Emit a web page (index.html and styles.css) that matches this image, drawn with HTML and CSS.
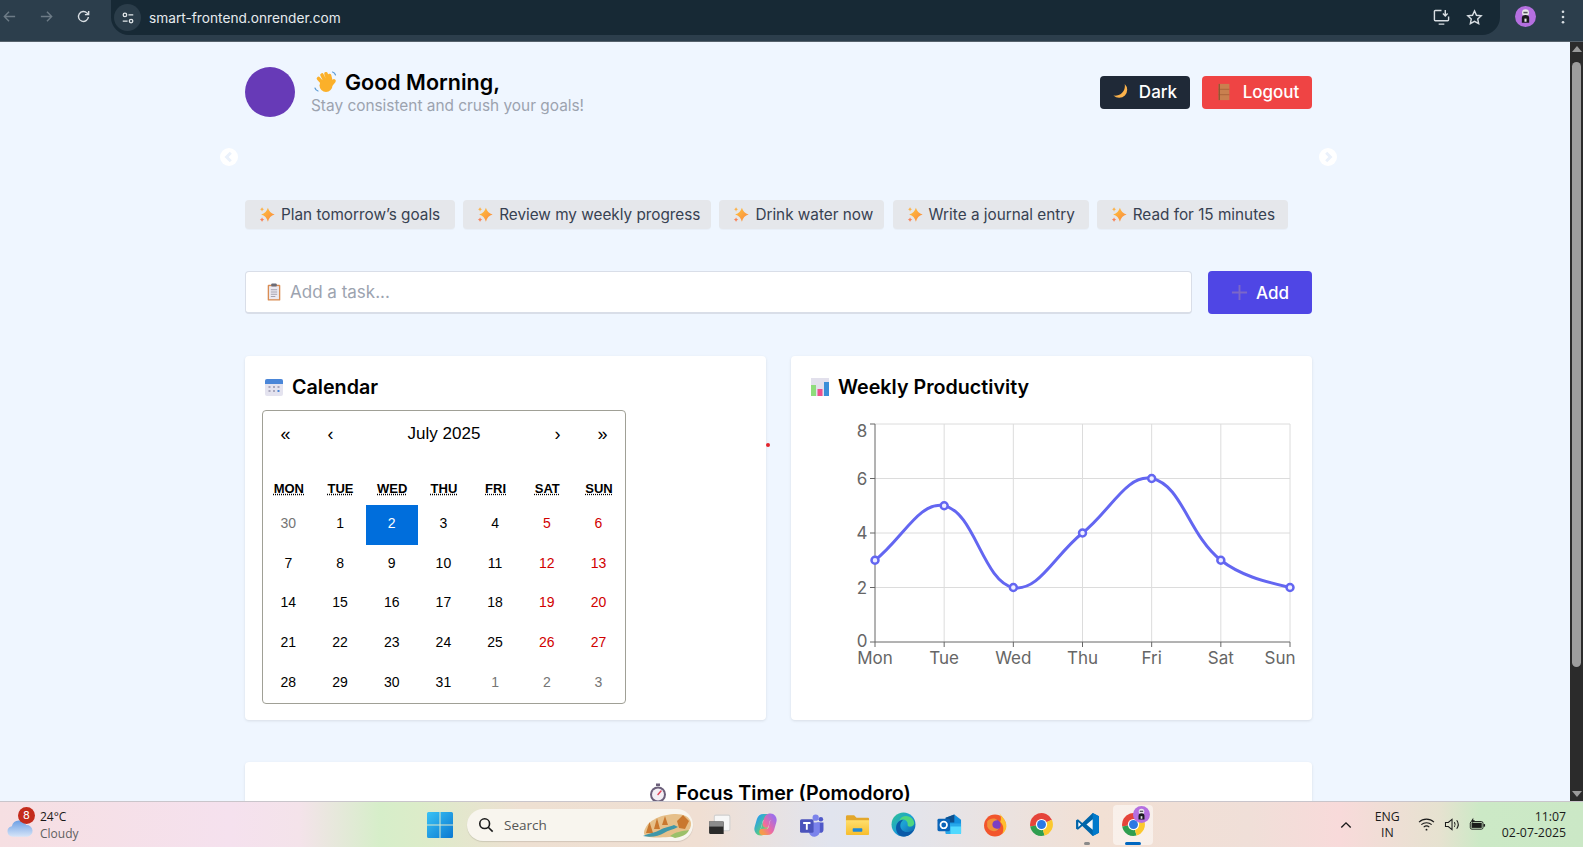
FILE: index.html
```html
<!DOCTYPE html>
<html lang="en">
<head>
  <meta charset="UTF-8">
  <title>Smart Frontend</title>
  <meta name="viewport" content="width=device-width, initial-scale=1.0">
  <link rel="stylesheet" href="styles.css">
</head>
<body>
  <!-- Shared icons -->
  <svg class="sprite" aria-hidden="true">
    <defs>
      <linearGradient id="sparkGrad" x1="0" y1="0" x2="1" y2="1"><stop offset="0" stop-color="#ffc53d"/><stop offset="1" stop-color="#f9853f"/></linearGradient>
      <linearGradient id="edgeGrad" x1="0" y1="0" x2="1" y2="1"><stop offset="0" stop-color="#2fc58c"/><stop offset=".5" stop-color="#1c9fd6"/><stop offset="1" stop-color="#0c59a4"/></linearGradient>
      <linearGradient id="copilotA" x1="0" y1="0" x2="1" y2="1"><stop offset="0" stop-color="#2a9fe8"/><stop offset=".6" stop-color="#52c98a"/><stop offset="1" stop-color="#f2c14c"/></linearGradient>
      <linearGradient id="copilotB" x1="1" y1="0" x2="0" y2="1"><stop offset="0" stop-color="#a06ee8"/><stop offset=".6" stop-color="#ee6aa2"/><stop offset="1" stop-color="#f59a4c"/></linearGradient>
      <linearGradient id="folderGrad" x1="0" y1="0" x2="0" y2="1"><stop offset="0" stop-color="#ffdf6e"/><stop offset="1" stop-color="#f7bd2c"/></linearGradient>
      <linearGradient id="winGrad" x1="0" y1="0" x2="1" y2="1"><stop offset="0" stop-color="#3ac3f5"/><stop offset="1" stop-color="#0a78d1"/></linearGradient>
      <linearGradient id="cloudGrad" x1="0" y1="0" x2="0" y2="1"><stop offset="0" stop-color="#6d9fe4"/><stop offset="1" stop-color="#d5e4f8"/></linearGradient>
      <symbol id="sparkles" viewBox="0 0 20 20">
        <path fill="url(#sparkGrad)" d="M11 2c1 3.5 3.500 6.500 7.500 7.500-4 1-6.500 4-7.500 8-1-4-3.500-7-7.500-8 4-1 6.500-4 7.500-7.500z"/>
        <path fill="#fbb24b" d="M4.500 1c.4 1.600 1 2.300 2.500 2.700-1.500.4-2.100 1.100-2.500 2.700C4.100 4.800 3.500 4.100 2 3.700 3.500 3.300 4.100 2.600 4.500 1z"/>
        <path fill="#f7835a" d="M4.500 12.500c.4 1.600 1 2.300 2.500 2.700-1.500.4-2.100 1.100-2.500 2.700-.4-1.600-1-2.300-2.500-2.700 1.500-.4 2.100-1.100 2.500-2.700z"/>
      </symbol>
      <symbol id="chrome" viewBox="0 0 24 24">
        <path fill="#e5443a" d="M12 12L21.97 7.35A11 11 0 0 0 1.17 13.9Z"/>
        <path fill="#2f9e4f" d="M12 12L1.17 13.9A11 11 0 0 0 14.85 22.63Z"/>
        <path fill="#fbc82e" d="M12 12L14.85 22.63A11 11 0 0 0 21.97 7.35Z"/>
        <circle cx="12" cy="12" r="5.4" fill="#fff"/>
        <circle cx="12" cy="12" r="4.3" fill="#2b78e4"/>
      </symbol>
      <symbol id="profile" viewBox="0 0 20 20">
        <circle cx="10" cy="10" r="10" fill="#b56fe0"/>
        <circle cx="10" cy="6.5" r="3.3" fill="#e8e8ea"/>
        <path fill="#1b1b20" d="M6.500 16v-4.500a3.500 3 0 0 1 7 0V16z"/>
        <rect x="9" y="12" width="2" height="3" fill="#e8e8ea"/>
        <rect x="8" y="5.500" width="4" height="1.500" fill="#55555e"/>
      </symbol>
    </defs>
  </svg>

  <header class="browser-bar">
    <svg class="nav-icon dim" viewBox="0 0 16 16"><path d="M14 8H2.500M7.500 3L2.500 8l5 5"/></svg>
    <svg class="nav-icon dim" viewBox="0 0 16 16"><path d="M2 8h11.500M8.500 3l5 5-5 5"/></svg>
    <svg class="nav-icon" viewBox="0 0 16 16"><path d="M13.200 8.500a5.300 5.300 0 1 1-1.400-4.100L13.500 6M13.500 2v4h-4"/></svg>
    <div class="omnibox">
      <span class="site-info">
        <svg viewBox="0 0 16 16"><circle cx="4.5" cy="4.5" r="2"/><path d="M8.500 4.500H14M2 11.500h5.500"/><circle cx="11.5" cy="11.5" r="2"/></svg>
      </span>
      <span class="url">smart-frontend.onrender.com</span>
      <svg class="omni-icon install" viewBox="0 0 18 18"><path d="M9 1.500H2.500a1 1 0 0 0-1 1v9a1 1 0 0 0 1 1h13a1 1 0 0 0 1-1V8M6 16h6M13 1v6M10.500 4.800L13 7.300l2.500-2.500"/></svg>
      <svg class="omni-icon" viewBox="0 0 18 18"><path d="M9 2l2.100 4.600 5 .6-3.700 3.400 1 5L9 13.100l-4.400 2.500 1-5L1.900 7.200l5-.6z"/></svg>
    </div>
    <svg class="bar-avatar"><use href="#profile"/></svg>
    <svg class="kebab" viewBox="0 0 4 16"><circle cx="2" cy="2" r="1.5"/><circle cx="2" cy="8" r="1.5"/><circle cx="2" cy="14" r="1.5"/></svg>
  </header>

  <div class="viewport">
    <main class="page">
      <section class="top-row">
        <div class="user">
          <div class="avatar"></div>
          <div class="greeting">
            <h1>
              <svg class="emoji-wave" viewBox="0 0 24 24">
                <g fill="none" stroke="#fbb02a" stroke-width="3.6" stroke-linecap="round">
                  <path d="M10 14L5 8.500M12 12L8.500 5M15 11L12.500 3.800M17.500 11.500L16 5.500M18 14l2.500-3"/>
                </g>
                <circle cx="12.500" cy="15.500" r="6.500" fill="#fbb02a"/>
                <path fill="none" stroke="#5b9bd5" stroke-width="1.2" stroke-linecap="round" d="M19 2c1.500.4 2.600 1.500 3 3M1.500 18c.4 1.500 1.500 2.600 3 3"/>
              </svg>
              Good Morning,
            </h1>
            <p>Stay consistent and crush your goals!</p>
          </div>
        </div>
        <div class="actions">
          <button class="btn btn-dark">
            <svg class="btn-emoji" viewBox="0 0 20 20"><path fill="#fbb24b" d="M13 1A9 9 0 1 1 0.500 14C8 15 14.500 9 13 1z"/></svg>
            Dark
          </button>
          <button class="btn btn-red">
            <svg class="btn-emoji" viewBox="0 0 20 20"><rect x="4" y="1" width="12" height="18" fill="#c9804f"/><path stroke="#a9623a" stroke-width="1" d="M4 7h12M4 13h12"/><rect x="4" y="1" width="1.500" height="18" fill="#8f5532"/></svg>
            Logout
          </button>
        </div>
      </section>

      <div class="carousel-nav">
        <span class="round-arrow"><svg viewBox="0 0 10 10"><path d="M6.500 1.500L3 5l3.500 3.500"/></svg></span>
        <span class="round-arrow"><svg viewBox="0 0 10 10"><path d="M3.500 1.500L7 5 3.500 8.500"/></svg></span>
      </div>

      <div class="chips">
        <button class="chip"><svg class="spark"><use href="#sparkles"/></svg>Plan tomorrow’s goals</button>
        <button class="chip"><svg class="spark"><use href="#sparkles"/></svg>Review my weekly progress</button>
        <button class="chip"><svg class="spark"><use href="#sparkles"/></svg>Drink water now</button>
        <button class="chip"><svg class="spark"><use href="#sparkles"/></svg>Write a journal entry</button>
        <button class="chip"><svg class="spark"><use href="#sparkles"/></svg>Read for 15 minutes</button>
      </div>

      <form class="task-form">
        <label class="task-input">
          <svg class="clip-emoji" viewBox="0 0 16 20"><rect x="1" y="2" width="14" height="17.5" rx="1" fill="#d98d54"/><rect x="2.500" y="3.500" width="11" height="14.5" fill="#eceaf2"/><path stroke="#9d9aa8" d="M4.500 7.500h7M4.500 10h7M4.500 12.500h7M4.500 15h5"/><rect x="5" y="0.500" width="6" height="3.5" rx="1" fill="#6b6b76"/></svg>
          <input type="text" placeholder="Add a task...">
        </label>
        <button type="button" class="add-btn">
          <svg viewBox="0 0 18 18"><path d="M9 1v16M1 9h16"/></svg>
          Add
        </button>
      </form>

      <section class="cards">
        <span class="red-dot"></span>
        <article class="card">
          <h2>
            <svg class="title-emoji" viewBox="0 0 20 20"><rect x="1" y="2" width="18" height="17" rx="2" fill="#e4e3ef"/><path fill="#4a86d8" d="M1 7V4a2 2 0 0 1 2-2h14a2 2 0 0 1 2 2v3z"/><path fill="#a9a8bd" d="M4.500 9h2v2h-2zM9 9h2v2H9zM13.500 9h2v2h-2zM4.500 13h2v2h-2zM9 13h2v2H9z"/><path fill="#4a86d8" d="M13.500 13h2v2h-2z"/></svg>
            Calendar
          </h2>
          <div class="calendar">
            <div class="cal-nav">
              <span>«</span><span>‹</span><span class="cal-month">July 2025</span><span>›</span><span>»</span>
            </div>
            <div class="cal-weekdays">
              <abbr>Mon</abbr><abbr>Tue</abbr><abbr>Wed</abbr><abbr>Thu</abbr><abbr>Fri</abbr><abbr>Sat</abbr><abbr>Sun</abbr>
            </div>
            <div class="cal-days">
              <span class="other">30</span><span>1</span><span class="today">2</span><span>3</span><span>4</span><span class="weekend">5</span><span class="weekend">6</span>
              <span>7</span><span>8</span><span>9</span><span>10</span><span>11</span><span class="weekend">12</span><span class="weekend">13</span>
              <span>14</span><span>15</span><span>16</span><span>17</span><span>18</span><span class="weekend">19</span><span class="weekend">20</span>
              <span>21</span><span>22</span><span>23</span><span>24</span><span>25</span><span class="weekend">26</span><span class="weekend">27</span>
              <span>28</span><span>29</span><span>30</span><span>31</span><span class="other">1</span><span class="other">2</span><span class="other">3</span>
            </div>
          </div>
        </article>

        <article class="card">
          <h2>
            <svg class="title-emoji" viewBox="0 0 20 20"><rect x="1" y="1" width="18" height="18" fill="#e2e0ec"/><rect x="1" y="8" width="5" height="11" fill="#8fdc7c"/><rect x="7.500" y="12" width="5" height="7" fill="#ef4f8c"/><rect x="14" y="5" width="5" height="14" fill="#3b8fd8"/></svg>
            Weekly Productivity
          </h2>
          <svg class="chart" viewBox="808 410 490 260">
            <g class="grid">
              <path d="M875 424H1290M875 478.5H1290M875 533H1290M875 587.5H1290"/>
              <path d="M944.17 424V642M1013.33 424V642M1082.5 424V642M1151.67 424V642M1220.83 424V642M1290 424V642"/>
            </g>
            <path class="axis" d="M875 424V642H1290M870 424H875M870 478.5H875M870 533H875M870 587.5H875M870 642H875M875 642V647M944.17 642V647M1013.33 642V647M1082.5 642V647M1151.67 642V647M1220.83 642V647M1290 642V647"/>
            <g class="y-labels">
              <text x="862" y="437">8</text>
              <text x="862" y="485">6</text>
              <text x="862" y="539">4</text>
              <text x="862" y="594">2</text>
              <text x="862" y="647">0</text>
            </g>
            <g class="x-labels">
              <text x="875" y="664">Mon</text>
              <text x="944.17" y="664">Tue</text>
              <text x="1013.33" y="664">Wed</text>
              <text x="1082.5" y="664">Thu</text>
              <text x="1151.67" y="664">Fri</text>
              <text x="1220.83" y="664">Sat</text>
              <text x="1280" y="664">Sun</text>
            </g>
            <path class="line" d="M875 560.25C902.67 538.45 919.2 500.83 944.17 505.75C974.53 511.73 982.97 581.52 1013.33 587.5C1038.3 592.42 1054.83 554.8 1082.5 533C1110.17 511.2 1126.7 473.58 1151.67 478.5C1182.03 484.48 1188.17 534.51 1220.83 560.25C1240 575 1262 581 1290 587.5"/>
            <g class="points">
              <circle cx="875" cy="560.25" r="3.5"/><circle cx="944.17" cy="505.75" r="3.5"/><circle cx="1013.33" cy="587.5" r="3.5"/><circle cx="1082.5" cy="533" r="3.5"/><circle cx="1151.67" cy="478.5" r="3.5"/><circle cx="1220.83" cy="560.25" r="3.5"/><circle cx="1290" cy="587.5" r="3.5"/>
            </g>
          </svg>
        </article>
      </section>

      <section class="card timer-card">
        <h2>
          <svg class="title-emoji" viewBox="0 0 20 20"><rect x="8" y="0.500" width="4" height="2.5" fill="#6b5f7a"/><circle cx="10" cy="11.5" r="8" fill="#6b5f7a"/><circle cx="10" cy="11.5" r="6" fill="#f3eff5"/><path stroke="#e0455a" stroke-width="1.5" stroke-linecap="round" d="M10 11.500L13 8"/></svg>
          Focus Timer (Pomodoro)
        </h2>
      </section>
    </main>

    <div class="scrollbar">
      <span class="sb-up"></span>
      <span class="sb-thumb"></span>
      <span class="sb-down"></span>
    </div>
  </div>

  <footer class="taskbar">
    <div class="weather">
      <svg class="cloud" viewBox="0 0 28 22"><path fill="url(#cloudGrad)" d="M7 21a5.500 5.500 0 0 1-1-10.900A8 8 0 0 1 21 9a6 6 0 0 1 1 12z"/></svg>
      <span class="badge">8</span>
      <div class="weather-text">
        <span>24°C</span>
        <span class="muted">Cloudy</span>
      </div>
    </div>

    <div class="apps">
      <svg class="win" viewBox="0 0 26 26"><path fill="url(#winGrad)" d="M0 1.500A1.500 1.500 0 0 1 1.500 0h11v12.500H0zM13.500 0h11A1.500 1.500 0 0 1 26 1.500v11H13.500zM0 13.500h12.500V26h-11A1.500 1.500 0 0 1 0 24.500zM13.500 13.500H26v11a1.500 1.500 0 0 1-1.500 1.500h-11z"/></svg>

      <div class="search">
        <svg class="search-icon" viewBox="0 0 18 18"><circle cx="7.5" cy="7.5" r="5.5"/><path d="M11.500 11.500L16.500 16.500"/></svg>
        <span>Search</span>
        <svg class="search-art" viewBox="0 0 52 26">
          <path fill="#e6c08a" d="M4 20C6 10 18 3 34 2c8-.5 16 2 17 9 1 8-8 13-22 14C14 26 3 26 4 20z"/>
          <path fill="#c9782f" d="M6 21l3.500-11L13 21zM14 17l3-11 3 11zM22 13l3-9 3 9zM37 9l6-6 6 6-4 8-6-1z"/>
          <path fill="#3f97a8" d="M3 24c6-3 12-3 17-6 5-3 9-3 14-5l4 2c-5 3-10 3-14 6-5 3-13 5-21 3z"/>
          <path fill="#9bc06a" d="M30 24c5-4 12-5 19-6-2 5-8 7-14 8z"/>
        </svg>
      </div>

      <span class="app">
        <svg viewBox="0 0 24 24"><rect x="7" y="3" width="15" height="15" rx="1.5" fill="#f7f7f7" stroke="#d0d0d0"/><path fill="#2a2a2a" d="M2 9h13a1 1 0 0 1 1 1v11H3a1 1 0 0 1-1-1z"/><path fill="#8c8c8c" d="M2 9h14v5H2z"/></svg>
      </span>
      <span class="app">
        <svg viewBox="0 0 24 24" fill="none" stroke-width="6" stroke-linecap="round" stroke-linejoin="round">
          <path stroke="url(#copilotA)" d="M15 5H10C8 5 7 6.500 6.500 8L4.500 15c-.8 3 1 5 3.500 4.500 1.500-.3 2.200-1.500 2.800-3.500l1-4"/>
          <path stroke="url(#copilotB)" d="M9 19h5c2 0 3-1.500 3.500-3l2-7c.8-3-1-5-3.500-4.500-1.500.3-2.200 1.500-2.800 3.500l-1 4"/>
        </svg>
      </span>
      <span class="app">
        <svg viewBox="0 0 24 24">
          <circle cx="16" cy="5.5" r="3" fill="#7b83eb"/><circle cx="21" cy="7" r="2.2" fill="#5059c9"/>
          <path fill="#5059c9" d="M17 10h6.500v7a3 3 0 0 1-6 0z"/>
          <path fill="#7b83eb" d="M9 10h11v8a5 5 0 0 1-10.500 1z"/>
          <rect x="1" y="7" width="13" height="13" rx="1.5" fill="#4b53bc"/>
          <path stroke="#fff" stroke-width="1.8" d="M4 10.500h7M7.500 10.500V17"/>
        </svg>
      </span>
      <span class="app">
        <svg viewBox="0 0 26 24"><path fill="#e3a72b" d="M1 4a1.500 1.500 0 0 1 1.500-1.500h7L12 5h12a1 1 0 0 1 1 1v3H1z"/><path fill="url(#folderGrad)" d="M1 7.500h24V22a1 1 0 0 1-1 1H2a1 1 0 0 1-1-1z"/><rect x="8" y="16" width="10" height="3.5" rx=".8" fill="#1f88d6"/></svg>
      </span>
      <span class="app">
        <svg viewBox="0 0 24 24">
          <circle cx="12" cy="12" r="11.5" fill="url(#edgeGrad)"/>
          <path fill="#0a5aa8" d="M22 17c-2 4-6 6.500-10 6.500-5 0-8-5-7-10 1-4 4-6 7-6-3 2-4 6-2 9 2 3 7 4 12 .5z"/>
          <path fill="#4fd67f" d="M8 8C10 3 17 2.500 20.500 6.500c2.500 3 2.500 6.500-1 7.500-2.500.5-4-.5-3.500-2.500C16 8 12 6 8 8z"/>
        </svg>
      </span>
      <span class="app">
        <svg viewBox="0 0 26 24"><path fill="#1490df" d="M9 5l9-3.500L25 7v14H9z"/><path fill="#28a8ea" d="M9 11h16v10a1 1 0 0 1-1 1H10a1 1 0 0 1-1-1z"/><path fill="#50d9ff" d="M14 14h11v7a1 1 0 0 1-1 1H14z"/><path fill="#0f4f8c" d="M9 5l9-3.500V10H9z"/><rect x="0.500" y="6" width="13" height="13" rx="1.5" fill="#0a64b8"/><circle cx="7" cy="12.5" r="3.4" fill="none" stroke="#fff" stroke-width="1.8"/></svg>
      </span>
      <span class="app">
        <svg viewBox="0 0 24 24">
          <circle cx="11.5" cy="13" r="10.5" fill="#f2552c"/>
          <path fill="#ffbd2e" d="M16 1c1 3 7 7 6.500 13-.4 3.500-2 5.500-4 7 2-5 1-9-2-11.500C18 7 17 4 16 1z"/>
          <circle cx="11.5" cy="12.5" r="5.5" fill="#7b3fc4"/>
          <path fill="#f0913a" d="M4 9c3-3.500 8-3.500 10-1-3 0-5 1.500-5 4 0 3 3 5 6.500 3.500C13 20 6 19 4 14z"/>
        </svg>
      </span>
      <span class="app"><svg viewBox="0 0 24 24"><use href="#chrome"/></svg></span>
      <span class="app running">
        <svg viewBox="0 0 24 24"><path fill="#0065a9" d="M17 1l6 3v16l-6 3L7 13.500 2.800 17 1 16V8l1.800-1L7 10.500z"/><path fill="#007acc" d="M17 1l6 3v16l-6 3z"/><path fill="#fff" fill-opacity=".95" d="M17 7l-6 5 6 5z"/><path fill="#fff" d="M3.200 9.500L5.800 12l-2.600 2.500z"/></svg>
      </span>
      <span class="app active">
        <svg viewBox="0 0 24 24"><use href="#chrome"/></svg>
        <svg class="app-badge"><use href="#profile"/></svg>
      </span>
    </div>

    <div class="tray">
      <svg class="chevron" viewBox="0 0 14 8"><path d="M1.500 7L7 1.500 12.500 7"/></svg>
      <div class="lang">ENG<br>IN</div>
      <svg class="tray-icon wifi" viewBox="0 0 18 16"><path d="M1 5.500c4.500-4.300 11.500-4.300 16 0M3.500 8.200c3-2.900 8-2.900 11 0M6 10.800c1.700-1.500 4.300-1.500 6 0"/><circle cx="9" cy="13.5" r="1" fill="#1a1a1a" stroke="none"/></svg>
      <svg class="tray-icon" viewBox="0 0 18 16"><path d="M1.500 5.800v4.400h3L8.500 13.500V2.500L4.500 5.800zM11 5.500c1 1.500 1 3.500 0 5M13.500 3.500c2 2.700 2 6.300 0 9"/></svg>
      <svg class="tray-icon" viewBox="0 0 20 16"><rect x="1.5" y="4.5" width="15" height="9" rx="2"/><rect x="3" y="6" width="12" height="6" fill="#1a1a1a" stroke="none"/><path d="M18 7.500v3" stroke-width="1.8"/><path fill="#1a1a1a" stroke="none" d="M5 0L2.500 4h2L3.500 7 7 3H5z"/></svg>
      <div class="clock">11:07<br>02-07-2025</div>
    </div>
  </footer>
</body>
</html>
```

FILE: styles.css
```css
* {
  box-sizing: border-box;
}

html, body {
  margin: 0;
  height: 100%;
}

body {
  display: flex;
  flex-direction: column;
  overflow: hidden;
  font-family: 'Inter', 'Liberation Sans', sans-serif;
  background: #eff6ff;
  color: #000;
}

.sprite {
  position: absolute;
  width: 0;
  height: 0;
}

/* Browser chrome */
.browser-bar {
  height: 42px;
  flex: none;
  display: flex;
  align-items: flex-start;
  background: #2c3e4c;
  border-bottom: 1px solid #56626c;
  padding-left: 2px;
}

.nav-icon {
  width: 15px;
  height: 15px;
  margin: 9px 22px 0 0;
  flex: none;
  fill: none;
  stroke: #d8dee3;
  stroke-width: 1.5;
}

.nav-icon.dim {
  stroke: #6d7b86;
}

.omnibox {
  width: 1389px;
  height: 35px;
  margin-left: -2px;
  display: flex;
  align-items: center;
  padding-left: 3px;
  background: #172935;
  border-radius: 0 0 18px 18px;
}

.site-info {
  width: 27px;
  height: 27px;
  border-radius: 50%;
  background: #2b3d4a;
  display: flex;
  align-items: center;
  justify-content: center;
}

.site-info svg {
  width: 14px;
  height: 14px;
  fill: none;
  stroke: #e2e7ea;
  stroke-width: 1.5;
}

.url {
  margin-left: 8px;
  font-size: 13.7px;
  color: #e6ebee;
  flex: 1;
}

.omni-icon {
  width: 17px;
  height: 17px;
  margin-right: 17px;
  fill: none;
  stroke: #d8dee3;
  stroke-width: 1.5;
}

.omni-icon.install {
  margin-right: 16px;
}

.bar-avatar {
  width: 21px;
  height: 21px;
  margin: 6px 0 0 15px;
}

.kebab {
  width: 4px;
  height: 14px;
  margin: 10px 0 0 25px;
  fill: #d8dee3;
}

/* Page */
.viewport {
  flex: 1;
  min-height: 0;
  display: flex;
  position: relative;
}

.page {
  flex: 1;
  min-width: 0;
  overflow: hidden;
  padding: 25px 0 0 245px;
}

.page > * {
  width: 1067px;
}

.top-row {
  display: flex;
  justify-content: space-between;
  align-items: center;
}

.user {
  display: flex;
  align-items: center;
  gap: 16px;
}

.avatar {
  width: 50px;
  height: 50px;
  border-radius: 50%;
  background: #673ab7;
}

.greeting {
  padding-top: 2px;
}

h1 {
  margin: 0;
  display: flex;
  align-items: center;
  gap: 7px;
  font-size: 21.5px;
  line-height: 26px;
  font-weight: 600;
}

.greeting p {
  margin: 0;
  font-size: 15.4px;
  line-height: 22px;
  color: #9ca3af;
}

.emoji-wave {
  width: 25px;
  height: 24px;
  margin-left: 2px;
}

.actions {
  display: flex;
  gap: 12px;
}

.btn {
  height: 33px;
  display: flex;
  align-items: center;
  justify-content: center;
  gap: 8px;
  border: 0;
  border-radius: 4px;
  color: #fff;
  font: 500 17px 'Inter', sans-serif;
}

.btn-dark {
  width: 90px;
  background: #1f2937;
}

.btn-red {
  width: 110px;
  gap: 10px;
  background: #ef4444;
}

.btn-emoji {
  width: 18px;
  height: 18px;
}

.carousel-nav {
  margin: 31px 0 0 -25px;
  display: flex;
  justify-content: space-between;
}

.page > .carousel-nav {
  width: 1117px;
}

.round-arrow {
  width: 18px;
  height: 18px;
  border-radius: 50%;
  background: #fff;
  display: flex;
  align-items: center;
  justify-content: center;
}

.round-arrow svg {
  width: 12px;
  height: 12px;
  fill: none;
  stroke: #eaf1fb;
  stroke-width: 2.5;
}

.chips {
  margin-top: 34px;
  display: grid;
  grid-template-columns: 210px 248px 165px 196px 191px;
  gap: 8.2px;
}

.chip {
  height: 29px;
  padding: 0 0 0 13px;
  display: flex;
  align-items: center;
  gap: 5px;
  border: 0;
  border-radius: 4px;
  background: #e5e7eb;
  color: #374151;
  font: 400 15.3px 'Inter', sans-serif;
  box-shadow: 0 1px 1px rgba(0, 0, 0, 0.03);
}

.spark {
  width: 18px;
  height: 18px;
}

.task-form {
  margin-top: 42px;
  display: flex;
  gap: 16px;
}

.task-input {
  flex: 1;
  height: 43px;
  display: flex;
  align-items: center;
  gap: 6px;
  padding-left: 20px;
  background: #fff;
  border: 1px solid #d9dee8;
  border-bottom-width: 2px;
  border-radius: 4px;
}

.clip-emoji {
  width: 16px;
  height: 18px;
}

.task-input input {
  flex: 1;
  border: 0;
  outline: 0;
  background: none;
  font: 400 17px 'Inter', sans-serif;
}

.task-input input::placeholder {
  color: #9ca3af;
  opacity: 1;
}

.add-btn {
  width: 104px;
  height: 43px;
  display: flex;
  align-items: center;
  justify-content: center;
  gap: 8px;
  border: 0;
  border-radius: 4px;
  background: #4f46e5;
  color: #fff;
  font: 500 17px 'Inter', sans-serif;
}

.add-btn svg {
  width: 17px;
  height: 17px;
  fill: none;
  stroke: #7b67c8;
  stroke-width: 2;
}

.cards {
  margin-top: 42px;
  display: grid;
  grid-template-columns: 521px 521px;
  gap: 25px;
  position: relative;
}

.red-dot {
  position: absolute;
  left: 521px;
  top: 87px;
  width: 4px;
  height: 4px;
  border-radius: 50%;
  background: #e3242b;
}

.card {
  height: 364px;
  padding: 17px;
  background: #fff;
  border-radius: 4px;
  box-shadow: 0 1px 3px rgba(0, 0, 0, 0.1);
}

h2 {
  margin: 0 0 9px;
  display: flex;
  align-items: center;
  gap: 8px;
  font-size: 19.7px;
  line-height: 28px;
  font-weight: 600;
}

.title-emoji {
  width: 20px;
  height: 20px;
  margin-left: 2px;
}

.chart {
  display: block;
  width: 490px;
  height: 260px;
}

.grid path {
  fill: none;
  stroke: #dcdcdc;
  stroke-width: 1;
}

.axis {
  fill: none;
  stroke: #666;
  stroke-width: 1;
}

.chart text {
  fill: #666;
  font-size: 17px;
  font-family: 'Inter', sans-serif;
  text-anchor: middle;
}

.line {
  fill: none;
  stroke: #6366f1;
  stroke-width: 3;
}

.points circle {
  fill: #eef;
  stroke: #6366f1;
  stroke-width: 2.5;
}

/* Calendar */
.calendar {
  width: 364px;
  height: 294px;
  border: 1px solid #a0a096;
  border-radius: 4px;
  font-family: 'Liberation Sans', Arial, sans-serif;
  color: #000;
}

.cal-nav {
  height: 46px;
  display: grid;
  grid-template-columns: 45px 45px 1fr 45px 45px;
  align-items: center;
  text-align: center;
  font-size: 18px;
}

.cal-month {
  font-size: 17px;
}

.cal-weekdays {
  margin-top: 15px;
  height: 33px;
  display: grid;
  grid-template-columns: repeat(7, 51.7px);
  align-items: center;
  text-align: center;
  font-size: 13px;
  font-weight: 700;
  text-transform: uppercase;
}

.cal-weekdays abbr {
  text-decoration: underline dotted;
}

.cal-days {
  display: grid;
  grid-template-columns: repeat(7, 51.7px);
  grid-auto-rows: 39.6px;
  font-size: 14px;
  text-align: center;
}

.cal-days span {
  display: flex;
  align-items: center;
  justify-content: center;
  padding: 0 1px 3px 0;
}

.cal-days .today {
  background: #006edc;
  color: #fff;
}

.cal-days .weekend {
  color: #d10000;
}

.cal-days .other {
  color: #757575;
}

/* Focus timer, cut off by the fold */
.timer-card {
  margin-top: 42px;
  height: 200px;
  padding-top: 17px;
}

.timer-card h2 {
  justify-content: center;
}

/* Scrollbar */
.scrollbar {
  width: 13px;
  flex: none;
  background: #2b2b2b;
  display: flex;
  flex-direction: column;
  align-items: center;
  padding: 4px 0;
}

.sb-up,
.sb-down {
  width: 0;
  height: 0;
  border-left: 5px solid transparent;
  border-right: 5px solid transparent;
}

.sb-up {
  border-bottom: 6px solid #9a9a9a;
}

.sb-down {
  margin-top: auto;
  border-top: 6px solid #9a9a9a;
}

.sb-thumb {
  width: 9px;
  height: 605px;
  margin-top: 10px;
  border-radius: 5px;
  background: #9e9e9e;
}

/* Windows taskbar */
.taskbar {
  height: 46px;
  flex: none;
  display: flex;
  align-items: center;
  position: relative;
  border-top: 1px solid #c9c5cb;
  background: linear-gradient(90deg, #f6dfe2 0, #f5e1ee 230px, #f4e3ea 300px, #d6eec9 380px, #dcecc9 420px, #eee0d2 520px, #f0dfd3 700px, #e1e4ee 830px, #e4e4ea 920px, #f2e0d4 1100px, #f0dfd8 1250px, #f8dada 1340px, #e6e2d0 1440px, #cce9c6 1480px, #cbe8c6 1583px);
}

.weather {
  width: 427px;
  flex: none;
  display: flex;
  align-items: center;
  position: relative;
  padding-left: 6px;
  font-size: 12px;
}

.cloud {
  width: 27px;
  height: 24px;
  margin-top: 4px;
}

.badge {
  position: absolute;
  left: 18px;
  top: -1px;
  width: 17px;
  height: 17px;
  border-radius: 50%;
  background: #c42b1c;
  color: #fff;
  font-size: 11px;
  line-height: 17px;
  text-align: center;
}

.weather-text {
  margin-left: 7px;
  display: flex;
  flex-direction: column;
  line-height: 17px;
  font-family: 'Open Sans', sans-serif;
  color: #1a1a1a;
}

.muted {
  color: #5f5f5f;
}

.apps {
  display: flex;
  align-items: center;
}

.win {
  width: 26px;
  height: 26px;
  margin-right: 14px;
}

.search {
  width: 226px;
  height: 32px;
  display: flex;
  align-items: center;
  padding-left: 11px;
  margin-right: 3px;
  border-radius: 16px;
  background: #f8f5ee;
  box-shadow: 0 1px 1px rgba(0, 0, 0, 0.12);
  font: 13.5px 'Open Sans', sans-serif;
  color: #555;
}

.search-icon {
  width: 16px;
  height: 16px;
  margin-right: 10px;
  fill: none;
  stroke: #1a1a1a;
  stroke-width: 1.8;
}

.search-art {
  width: 52px;
  height: 26px;
  margin-left: auto;
  margin-right: 1px;
}

.app {
  width: 46px;
  height: 40px;
  display: flex;
  align-items: center;
  justify-content: center;
  position: relative;
}

.app > svg {
  width: 25px;
  height: 25px;
}

.app.running::after,
.app.active::after {
  content: "";
  position: absolute;
  bottom: 0;
  left: 50%;
  height: 3px;
  border-radius: 2px;
  transform: translateX(-50%);
}

.app.running::after {
  width: 6px;
  background: #8a8a8a;
}

.app.active {
  width: 40px;
  margin-left: 3px;
  border-radius: 4px;
  background: rgba(255, 255, 255, 0.5);
}

.app.active::after {
  width: 16px;
  background: #0067c0;
}

.app > .app-badge {
  position: absolute;
  right: 3px;
  top: 1px;
  width: 17px;
  height: 17px;
}

.tray {
  margin-left: auto;
  display: flex;
  align-items: center;
  padding-right: 17px;
  font-family: 'Open Sans', sans-serif;
  font-size: 12.3px;
  color: #1a1a1a;
}

.chevron {
  width: 12px;
  height: 8px;
  margin-right: 23px;
  fill: none;
  stroke: #1a1a1a;
  stroke-width: 1.6;
}

.lang {
  text-align: center;
  line-height: 16px;
  margin-right: 18px;
}

.tray-icon {
  width: 17px;
  height: 15px;
  margin-right: 8px;
  fill: none;
  stroke: #1a1a1a;
  stroke-width: 1.1;
}

.tray-icon.wifi {
  margin-right: 9px;
}

.clock {
  margin-left: 8px;
  text-align: right;
  line-height: 16px;
}
```
